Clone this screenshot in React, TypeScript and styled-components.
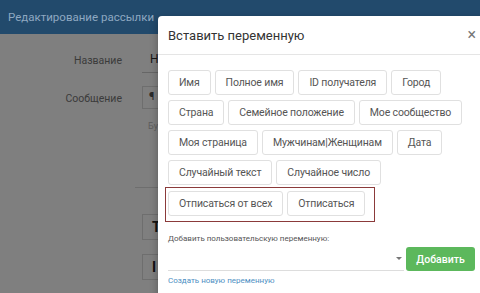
import React from "react";
import styled, { createGlobalStyle } from "styled-components";

const GlobalStyle = createGlobalStyle`
  html, body {
    margin: 0;
    padding: 0;
    width: 480px;
    height: 293px;
    overflow: hidden;
    background: #fff;
    font-family: Roboto, "Liberation Sans", sans-serif;
  }
  * { box-sizing: border-box; }
`;

const Page = styled.div`
  position: relative;
  width: 480px;
  height: 293px;
  overflow: hidden;
`;

const TopBar = styled.header`
  position: relative;
  z-index: 2;
  height: 34px;
  background: #224a6c;
  display: flex;
  align-items: center;
  padding-left: 8px;
  color: #8ea8c1;
  font-size: 11.5px;
`;

const Form = styled.div`
  display: grid;
  grid-template-columns: 122px 1fr;
  column-gap: 20px;
  padding-top: 16px;
`;

const Label = styled.div<{ $top: number }>`
  text-align: right;
  font-size: 10.5px;
  color: #777;
  margin-top: ${(p) => p.$top}px;
`;

const NameInput = styled.div`
  margin-top: 2px;
  height: 21px;
  border-bottom: 1px solid #ccc;
  font-size: 12px;
  color: #333;
  padding-left: 8px;
`;

const MessageBox = styled.div`
  margin-top: 13px;
  width: 40px;
  height: 23px;
  border: 1px solid #ddd;
  padding: 3px 6px;
  font-size: 11px;
  color: #555;
`;

const Hint = styled.div`
  font-size: 9px;
  color: #bbb;
  padding: 12px 0 0 6px;
`;

const Rule = styled.div`
  margin: 56px 0 0 -7px;
  height: 1px;
  background: #ddd;
`;

const ToolBox = styled.div<{ $top: number }>`
  margin-top: ${(p) => p.$top}px;
  width: 40px;
  height: 26px;
  border: 1px solid #ddd;
  display: flex;
  align-items: center;
  padding-left: 9px;
  font-weight: 700;
  font-size: 14px;
  color: #222;
`;

const Backdrop = styled.div`
  position: absolute;
  inset: 0;
  z-index: 1;
  background: rgba(0, 0, 0, 0.5);
`;

const Modal = styled.div`
  position: absolute;
  z-index: 3;
  left: 158px;
  top: 16px;
  width: 330px;
  height: 300px;
  background: #fff;
  border-radius: 4px 0 0 0;
  box-shadow: 0 3px 9px rgba(0, 0, 0, 0.3);
`;

const ModalHeader = styled.div`
  height: 39px;
  border-bottom: 1px solid #e5e5e5;
  display: flex;
  align-items: center;
  justify-content: space-between;
  padding: 0 10px 0 10px;
`;

const Title = styled.h4`
  margin: 0;
  font-size: 13px;
  font-weight: 400;
  color: #333;
`;

const Close = styled.span`
  font-size: 16px;
  color: #777;
  line-height: 1;
  margin-right: 2px;
`;

const ModalBody = styled.div`
  padding: 15px 10px 0 10px;
`;

const Tags = styled.div`
  display: flex;
  flex-wrap: wrap;
  gap: 5px 4px;
  width: 310px;
`;

const Tag = styled.button`
  height: 25px;
  padding: 0 10px;
  border: 1px solid #e0e0e0;
  border-radius: 3px;
  background: #fff;
  font-family: Roboto, "Liberation Sans", sans-serif;
  font-size: 10.5px;
  letter-spacing: -0.15px;
  color: #555;
  white-space: nowrap;
`;

const Highlight = styled.div`
  display: flex;
  gap: 4px;
  margin: 2px 0 0 -3px;
  padding: 3px 13px 5px 2px;
  width: 210px;
  border: 1px solid #8b3a3a;
`;

const SmallLabel = styled.div`
  margin-top: 12px;
  font-size: 8px;
  color: #555;
`;

const AddRow = styled.div`
  display: flex;
  align-items: stretch;
  margin-top: 4px;
  width: 307px;
  height: 24px;
`;

const Select = styled.div`
  flex: 1;
  border-bottom: 1px solid #ddd;
  display: flex;
  justify-content: flex-end;
  align-items: center;
  padding-right: 2px;
`;

const Caret = styled.span`
  width: 0;
  height: 0;
  border-left: 3px solid transparent;
  border-right: 3px solid transparent;
  border-top: 3px solid #777;
`;

const AddButton = styled.button`
  margin-left: 2px;
  width: 69px;
  border: none;
  border-radius: 3px;
  background: #5cb85c;
  color: #fff;
  font-family: Roboto, "Liberation Sans", sans-serif;
  font-size: 10.5px;
  font-weight: 500;
`;

const CreateLink = styled.a`
  display: block;
  margin-top: 5px;
  font-size: 8px;
  color: #4e8fc3;
`;

const rows = [
  ["Имя", "Полное имя", "ID получателя", "Город"],
  ["Страна", "Семейное положение", "Мое сообщество"],
  ["Моя страница", "Мужчинам|Женщинам", "Дата"],
  ["Случайный текст", "Случайное число"],
];

export default function App() {
  return (
    <Page>
      <GlobalStyle />
      <TopBar>Редактирование рассылки</TopBar>
      <Form>
        <Label $top={4}>Название</Label>
        <NameInput>Н</NameInput>
        <Label $top={19}>Сообщение</Label>
        <div>
          <MessageBox>¶</MessageBox>
          <Hint>Бу</Hint>
          <Rule />
          <ToolBox $top={26}>T</ToolBox>
          <ToolBox $top={14}>I</ToolBox>
        </div>
      </Form>
      <Backdrop />
      <Modal>
        <ModalHeader>
          <Title>Вставить переменную</Title>
          <Close>×</Close>
        </ModalHeader>
        <ModalBody>
          <Tags>
            {rows.flat().map((t) => (
              <Tag key={t}>{t}</Tag>
            ))}
          </Tags>
          <Highlight>
            <Tag>Отписаться от всех</Tag>
            <Tag>Отписаться</Tag>
          </Highlight>
          <SmallLabel>Добавить пользовательскую переменную:</SmallLabel>
          <AddRow>
            <Select>
              <Caret />
            </Select>
            <AddButton>Добавить</AddButton>
          </AddRow>
          <CreateLink>Создать новую переменную</CreateLink>
        </ModalBody>
      </Modal>
    </Page>
  );
}
